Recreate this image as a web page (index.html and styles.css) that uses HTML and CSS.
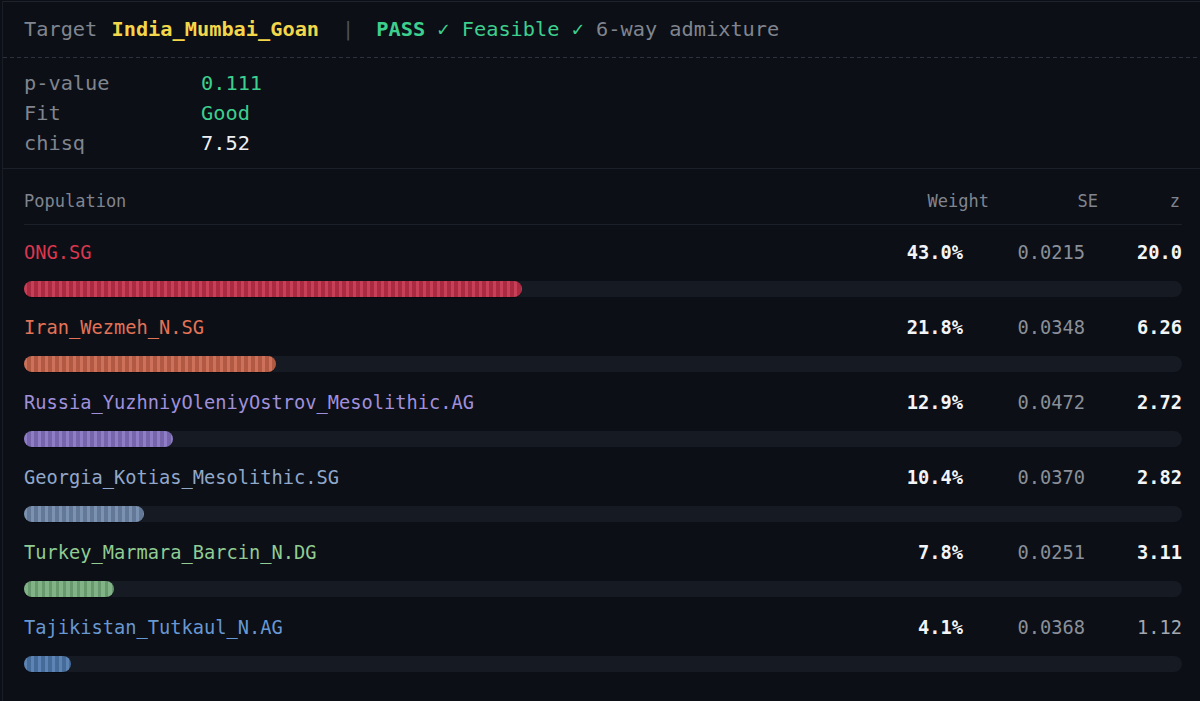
FILE: index.html
```html
<!DOCTYPE html>
<html lang="en">
<head>
<meta charset="utf-8">
<title>qpAdm result</title>
<link rel="stylesheet" href="styles.css">
</head>
<body>
<div class="panel">
  <div class="headline"><span class="muted">Target </span><span class="target">India_Mumbai_Goan</span><span class="sep">|</span><span class="pass">PASS</span><span class="ok"> ✓ Feasible ✓ </span><span class="muted">6-way admixture</span></div>
  <div class="stats">
    <div class="stat-label">p-value</div><div class="stat-val green">0.111</div>
    <div class="stat-label">Fit</div><div class="stat-val green">Good</div>
    <div class="stat-label">chisq</div><div class="stat-val white">7.52</div>
  </div>
  <div class="table">
    <div class="thead">
      <div class="th-name">Population</div>
      <div class="th">Weight</div>
      <div class="th">SE</div>
      <div class="th th-z">z</div>
    </div>
    <div class="row c-ong">
      <div class="cells"><div class="name">ONG.SG</div><div class="w">43.0%</div><div class="se">0.0215</div><div class="z strong">20.0</div></div>
      <div class="track"><div class="bar" style="width:43.0%"></div></div>
    </div>
    <div class="row c-iran">
      <div class="cells"><div class="name">Iran_Wezmeh_N.SG</div><div class="w">21.8%</div><div class="se">0.0348</div><div class="z strong">6.26</div></div>
      <div class="track"><div class="bar" style="width:21.8%"></div></div>
    </div>
    <div class="row c-russia">
      <div class="cells"><div class="name">Russia_YuzhniyOleniyOstrov_Mesolithic.AG</div><div class="w">12.9%</div><div class="se">0.0472</div><div class="z strong">2.72</div></div>
      <div class="track"><div class="bar" style="width:12.9%"></div></div>
    </div>
    <div class="row c-georgia">
      <div class="cells"><div class="name">Georgia_Kotias_Mesolithic.SG</div><div class="w">10.4%</div><div class="se">0.0370</div><div class="z strong">2.82</div></div>
      <div class="track"><div class="bar" style="width:10.4%"></div></div>
    </div>
    <div class="row c-turkey">
      <div class="cells"><div class="name">Turkey_Marmara_Barcin_N.DG</div><div class="w">7.8%</div><div class="se">0.0251</div><div class="z strong">3.11</div></div>
      <div class="track"><div class="bar" style="width:7.8%"></div></div>
    </div>
    <div class="row c-tajik">
      <div class="cells"><div class="name">Tajikistan_Tutkaul_N.AG</div><div class="w">4.1%</div><div class="se">0.0368</div><div class="z weak">1.12</div></div>
      <div class="track"><div class="bar" style="width:4.1%"></div></div>
    </div>
  </div>
</div>
</body>
</html>
```

FILE: styles.css
```css
* { box-sizing: border-box; }
html, body {
  margin: 0;
  padding: 0;
  background: #0c0f16;
  height: 100%;
}
body {
  font-family: "DejaVu Sans Mono", "Liberation Mono", monospace;
  color: #e8eaee;
  overflow: hidden;
}
.panel {
  margin: 1px 0 0 2px;
  border-top: 1px solid #1f232c;
  border-left: 1px solid #191d25;
  min-height: 700px;
}
.headline {
  font-size: 20.3px;
  line-height: 30px;
  padding: 12px 0 13px 21px;
  white-space: pre;
  background-image: repeating-linear-gradient(90deg, #2c313b 0 4px, transparent 4px 7px);
  background-size: 100% 1px;
  background-repeat: no-repeat;
  background-position: bottom left;
  height: 56px;
}
.muted { color: #80858f; }
.target { color: #f3d64a; font-weight: bold; margin-left: 2px; }
.sep { color: #4b505a; margin: 0 22px 0 23px; }
.pass { color: #3dcf8e; font-weight: bold; }
.ok { color: #3dcf8e; }
.stats {
  display: grid;
  grid-template-columns: 177px 1fr;
  font-size: 20.3px;
  line-height: 30px;
  padding: 10px 0 10px 21px;
  border-bottom: 1px solid #1c2029;
}
.stat-label { color: #80858f; }
.green { color: #3dcf8e; }
.white { color: #eef0f3; }
.table {
  padding: 0 18px 0 21px;
}
.thead {
  display: grid;
  grid-template-columns: 1fr 100px 109px 84px;
  font-size: 17px;
  line-height: 24px;
  color: #80858f;
  padding: 20px 0 11px;
  border-bottom: 1px solid #1c2029;
}
.th { text-align: right; }
.th-z { padding-right: 2px; }
.row {
  padding: 15px 0 3px;
}
.cells {
  display: grid;
  grid-template-columns: 1fr 100px 122px 97px;
  font-size: 18.7px;
  line-height: 26px;
}
.w, .se, .z { text-align: right; }
.w { color: #f2f4f7; font-weight: bold; }
.se { color: #8a8f99; }
.z.strong { color: #f2f4f7; font-weight: bold; }
.z.weak { color: #a2a7b0; }
.track {
  margin-top: 15px;
  height: 16px;
  border-radius: 8px;
  background: #161a23;
}
.bar {
  height: 16px;
  border-radius: 8px;
  background-color: var(--bar);
  background-image: repeating-linear-gradient(90deg, rgba(255,255,255,0.08) 0 3.5px, rgba(0,0,0,0.12) 3.5px 7px);
  box-shadow: 0 1px 0 rgba(0,0,0,0.35);
}
.c-ong { --bar: #c2304a; }
.c-ong .name { color: #d93750; }
.c-iran { --bar: #c9654c; }
.c-iran .name { color: #e27356; }
.c-russia { --bar: #8673c2; }
.c-russia .name { color: #a090dc; }
.c-georgia { --bar: #7189ab; }
.c-georgia .name { color: #91a8cb; }
.c-turkey { --bar: #76ad7c; }
.c-turkey .name { color: #90cc93; }
.c-tajik { --bar: #4f7aae; }
.c-tajik .name { color: #6898d3; }
```
